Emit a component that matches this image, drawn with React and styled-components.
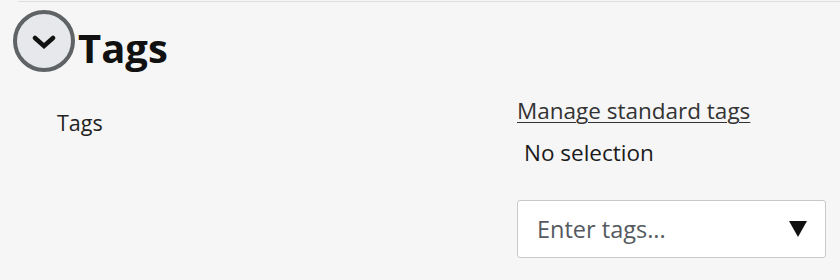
import React from 'react'
import styled, { createGlobalStyle } from 'styled-components'

const GlobalStyle = createGlobalStyle`
  html, body {
    margin: 0;
    background: #f6f6f6;
    font-family: "Open Sans", "Noto Sans", sans-serif;
    color: #1b1b1b;
  }
`

const Page = styled.div`
  padding-top: 1px;
  height: 279px;
  overflow: hidden;
`

const Section = styled.section`
  margin-left: 18px;
  border-top: 1px solid #dedede;
`

const Header = styled.div`
  display: flex;
  align-items: flex-start;
  padding-top: 8px;
  margin-left: -5px;
`

const ToggleButton = styled.button`
  width: 62px;
  height: 62px;
  box-sizing: border-box;
  border-radius: 50%;
  border: 4px solid #606366;
  background: #e6e8eb;
  padding: 2px 0 0 0;
  display: flex;
  align-items: center;
  justify-content: center;
  cursor: pointer;
`

const Heading = styled.h2`
  margin: 17px 0 0 3px;
  font-size: 40px;
  line-height: 42px;
  font-weight: 700;
  color: #111;
`

const Body = styled.div`
  display: grid;
  grid-template-columns: 460px 309px;
  margin: 24px 0 0 39px;
`

const Label = styled.div`
  margin-top: 12px;
  font-size: 21.5px;
  line-height: 30px;
  color: #222;
`

const Controls = styled.div`
  display: flex;
  flex-direction: column;
  align-items: flex-start;
`

const Link = styled.a`
  font-size: 22.5px;
  line-height: 30px;
  color: #333;
  text-decoration: underline;
  text-underline-offset: 3px;
  text-decoration-thickness: 1px;
`

const Status = styled.div`
  margin: 12px 0 0 7px;
  font-size: 22.5px;
  line-height: 30px;
  color: #1b1b1b;
`

const TagInput = styled.div`
  margin-top: 32px;
  width: 309px;
  height: 58px;
  box-sizing: border-box;
  display: flex;
  align-items: center;
  justify-content: space-between;
  padding: 0 18px 0 19px;
  background: #fff;
  border: 1px solid #c8c8c8;
  border-radius: 3px;
`

const Placeholder = styled.span`
  font-size: 23.5px;
  line-height: 30px;
  color: #555a60;
`

function Chevron() {
  return (
    <svg width="24" height="14" viewBox="0 0 24 14">
      <polyline points="3,3 12,11 21,3" fill="none" stroke="#111" strokeWidth="4.5" strokeLinecap="round" strokeLinejoin="miter" />
    </svg>
  )
}

function Caret() {
  return (
    <svg width="18" height="16" viewBox="0 0 18 16">
      <polygon points="0,0 18,0 9,16" fill="#111" />
    </svg>
  )
}

export default function App() {
  return (
    <Page>
      <GlobalStyle />
      <Section>
        <Header>
          <ToggleButton aria-label="Collapse tags">
            <Chevron />
          </ToggleButton>
          <Heading>Tags</Heading>
        </Header>
        <Body>
          <Label>Tags</Label>
          <Controls>
            <Link href="#">Manage standard tags</Link>
            <Status>No selection</Status>
            <TagInput>
              <Placeholder>Enter tags...</Placeholder>
              <Caret />
            </TagInput>
          </Controls>
        </Body>
      </Section>
    </Page>
  )
}
